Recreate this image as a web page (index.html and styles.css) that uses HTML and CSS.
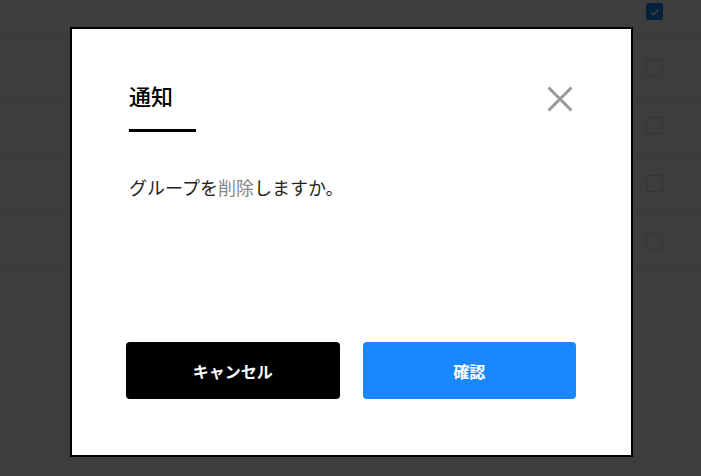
FILE: index.html
```html
<!DOCTYPE html>
<html lang="ja">
<head>
    <meta charset="UTF-8">
    <meta name="viewport" content="width=device-width, initial-scale=1.0">
    <title>グループ</title>
    <link rel="stylesheet" href="styles.css">
</head>
<body>
    <!-- Group list behind the dialog -->
    <div class="list">
        <div class="row row-top">
            <span class="check checked">
                <svg viewBox="0 0 16 16" width="12" height="12"><path d="M3 8.5l3.2 3L13 4.5" fill="none" stroke="#fff" stroke-width="2"/></svg>
            </span>
        </div>
        <div class="row"><span class="check"></span></div>
        <div class="row"><span class="check"></span></div>
        <div class="row"><span class="check"></span></div>
        <div class="row"><span class="check"></span></div>
    </div>

    <!-- Confirm dialog -->
    <div class="overlay">
        <div class="modal">
            <div class="modal-header">
                <h2 class="modal-title">通知</h2>
                <button class="close" aria-label="閉じる">
                    <svg viewBox="0 0 26 26" width="26" height="26"><path d="M1.5 1.5l23 23M24.5 1.5l-23 23" stroke="#999" stroke-width="3"/></svg>
                </button>
            </div>
            <p class="message">グループを<span class="muted">削除</span>しますか。</p>
            <div class="actions">
                <button class="btn btn-cancel">キャンセル</button>
                <button class="btn btn-ok">確認</button>
            </div>
        </div>
    </div>
</body>
</html>
```
FILE: styles.css
```css
body {
    margin: 0;
    padding: 0;
    font-family: "Noto Sans CJK JP", "Noto Sans", sans-serif;
    background: #fff;
    width: 701px;
    height: 476px;
    overflow: hidden;
}

/* List in the background */
.list {
    display: flex;
    flex-direction: column;
}

.row {
    height: 57px;
    border-bottom: 1px solid #e8e8e8;
    display: flex;
    align-items: center;
    justify-content: flex-end;
    padding-right: 38px;
}

.row-top {
    height: 39px;
    align-items: flex-start;
    padding-top: 3px;
    box-sizing: border-box;
}

.check {
    width: 15px;
    height: 15px;
    border: 1px solid #d9d9d9;
    border-radius: 2px;
    display: flex;
    align-items: center;
    justify-content: center;
}

.check.checked {
    background: #1890ff;
    border-color: #1890ff;
}

/* Dialog */
.overlay {
    position: fixed;
    inset: 0;
    background: rgba(0, 0, 0, 0.76);
}

.modal {
    position: absolute;
    left: 70px;
    top: 27px;
    box-sizing: border-box;
    width: 563px;
    height: 430px;
    background: #fff;
    border: 2px solid #000;
    display: flex;
    flex-direction: column;
    padding: 0 55px 0 54px;
}

.modal-header {
    display: flex;
    justify-content: space-between;
    align-items: flex-start;
    padding: 47px 0 0 3px;
}

.modal-title {
    margin: 0;
    font-size: 22px;
    font-weight: 500;
    line-height: 38px;
    padding-bottom: 15px;
    width: 67px;
    border-bottom: 3px solid #000;
    color: #000;
}

.close {
    border: none;
    background: none;
    padding: 0;
    margin: 10px 3px 0 0;
    cursor: pointer;
    line-height: 0;
}

.message {
    margin: 42px 0 0 3px;
    font-size: 18px;
    line-height: 26px;
    color: #222;
}

.muted {
    color: #888;
}

.actions {
    margin-top: auto;
    margin-bottom: 56px;
    display: flex;
    gap: 23px;
}

.btn {
    flex: 1;
    height: 57px;
    border: none;
    border-radius: 4px;
    color: #fff;
    font-family: inherit;
    font-size: 16px;
    font-weight: 700;
    cursor: pointer;
}

.btn-cancel {
    background: #000;
}

.btn-ok {
    background: #1a87ff;
}
```
